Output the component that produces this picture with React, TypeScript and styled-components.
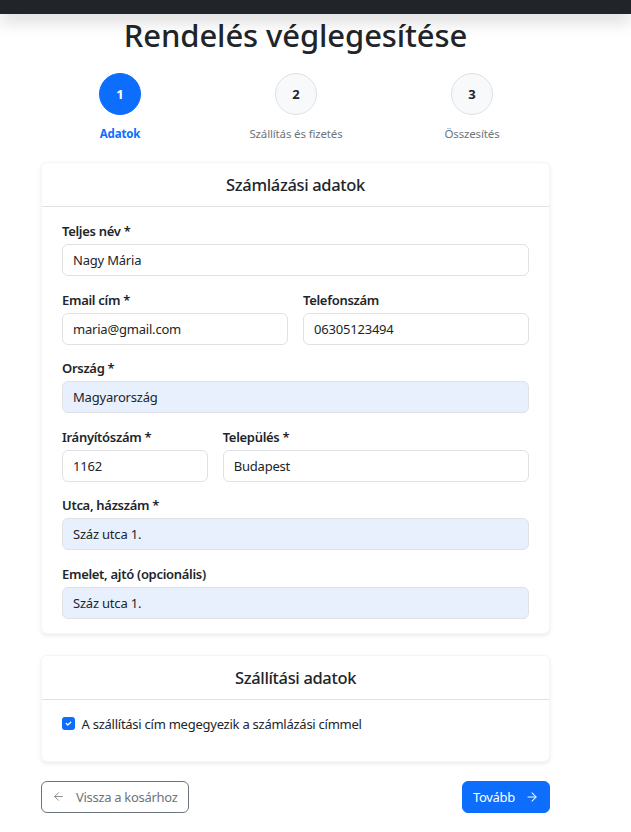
import React from "react";
import styled, { createGlobalStyle } from "styled-components";
import { ArrowLeft, ArrowRight } from "lucide-react";

const Global = createGlobalStyle`
  html, body { margin: 0; padding: 0; background: #fff; }
  body {
    font-family: "Segoe UI", "Noto Sans", "Open Sans", sans-serif;
    color: #212529;
    -webkit-font-smoothing: antialiased;
  }
  * { box-sizing: border-box; }
`;

const Navbar = styled.div`
  height: 14px;
  background: #212529;
  box-shadow: 0 0.5rem 1rem rgba(0, 0, 0, 0.15);
  position: relative;
  z-index: 1;
`;

const Main = styled.main`
  width: 509px;
  margin-left: 41px;
  padding-bottom: 19px;
`;

const Title = styled.h1`
  margin: 3px 0 20px;
  font-size: 31px;
  font-weight: 500;
  line-height: 36px;
  letter-spacing: -0.1px;
  text-align: center;
  color: #212529;
`;

const Steps = styled.div`
  display: grid;
  grid-template-columns: repeat(3, 176px);
  justify-content: center;
  margin: 0 -10px 0 -9px;
`;

const Step = styled.div`
  display: flex;
  flex-direction: column;
  align-items: center;
`;

const Circle = styled.div<{ $active?: boolean }>`
  width: 42px;
  height: 42px;
  border-radius: 50%;
  display: flex;
  align-items: center;
  justify-content: center;
  font-size: 13px;
  font-weight: 700;
  background: ${(p) => (p.$active ? "#0d6efd" : "#f8f9fa")};
  color: ${(p) => (p.$active ? "#fff" : "#212529")};
  border: 1px solid ${(p) => (p.$active ? "#0d6efd" : "#dee2e6")};
`;

const StepLabel = styled.div<{ $active?: boolean }>`
  margin-top: 10px;
  font-size: 11.5px;
  line-height: 18px;
  letter-spacing: -0.15px;
  font-weight: ${(p) => (p.$active ? 700 : 400)};
  color: ${(p) => (p.$active ? "#0d6efd" : "#6c757d")};
`;

const Card = styled.section`
  margin-top: 19px;
  background: #fff;
  border: 1px solid rgba(0, 0, 0, 0.04);
  border-radius: 6px;
  box-shadow: 0 0.125rem 0.25rem rgba(0, 0, 0, 0.075);
  & + & { margin-top: 21px; }
`;

const CardHeader = styled.h5`
  margin: 0;
  height: 44px;
  display: flex;
  align-items: center;
  justify-content: center;
  font-size: 16.5px;
  font-weight: 500;
  letter-spacing: -0.35px;
  border-bottom: 1px solid #dee2e6;
`;

const CardBody = styled.div<{ $pb?: number }>`
  padding: 14px 20px ${(p) => p.$pb ?? 0}px;
`;

const Row = styled.div<{ $cols: string }>`
  display: grid;
  grid-template-columns: ${(p) => p.$cols};
  column-gap: 15px;
`;

const Group = styled.div`
  margin-bottom: 13.6px;
`;

const Label = styled.label`
  display: block;
  font-size: 13px;
  font-weight: 600;
  line-height: 20px;
  letter-spacing: -0.3px;
  margin-bottom: 3px;
`;

const Input = styled.input<{ $filled?: boolean }>`
  display: block;
  width: 100%;
  height: 32px;
  padding: 0 11px 0 10px;
  font-family: inherit;
  font-size: 13px;
  letter-spacing: -0.2px;
  color: #212529;
  background: ${(p) => (p.$filled ? "#e8f0fe" : "#fff")};
  border: 1px solid #dee2e6;
  border-radius: 6px;
  outline: none;
`;

const Check = styled.label`
  display: flex;
  align-items: center;
  gap: 7px;
  font-size: 13px;
  line-height: 20px;
  letter-spacing: -0.25px;
`;

const CheckBox = styled.span`
  width: 12.5px;
  height: 12.5px;
  border-radius: 3px;
  background: #0d6efd;
  display: flex;
  align-items: center;
  justify-content: center;
`;

const Actions = styled.div`
  display: flex;
  justify-content: space-between;
  margin-top: 19px;
`;

const Button = styled.button<{ $primary?: boolean }>`
  height: 32px;
  display: inline-flex;
  align-items: center;
  gap: ${(p) => (p.$primary ? "10px" : "11px")};
  padding: 0 10px;
  font-family: inherit;
  font-size: 13px;
  letter-spacing: -0.3px;
  border-radius: 6px;
  cursor: pointer;
  background: ${(p) => (p.$primary ? "#0d6efd" : "#fff")};
  color: ${(p) => (p.$primary ? "#fff" : "#6c757d")};
  border: 1px solid ${(p) => (p.$primary ? "#0d6efd" : "#6c757d")};
`;

const steps = [
  { n: 1, label: "Adatok", active: true },
  { n: 2, label: "Szállítás és fizetés" },
  { n: 3, label: "Összesítés" },
];

const Field: React.FC<{ label: string; value: string; filled?: boolean }> = ({ label, value, filled }) => (
  <Group>
    <Label>{label}</Label>
    <Input $filled={filled} defaultValue={value} />
  </Group>
);

export default function App() {
  return (
    <>
      <Global />
      <Navbar />
      <Main>
        <Title>Rendelés véglegesítése</Title>
        <Steps>
          {steps.map((s) => (
            <Step key={s.n}>
              <Circle $active={s.active}>{s.n}</Circle>
              <StepLabel $active={s.active}>{s.label}</StepLabel>
            </Step>
          ))}
        </Steps>

        <Card>
          <CardHeader>Számlázási adatok</CardHeader>
          <CardBody>
            <Field label="Teljes név *" value="Nagy Mária" />
            <Row $cols="1fr 1fr">
              <Field label="Email cím *" value="maria@gmail.com" />
              <Field label="Telefonszám" value="06305123494" />
            </Row>
            <Field label="Ország *" value="Magyarország" filled />
            <Row $cols="calc((100% + 15px) / 3 - 15px) 1fr">
              <Field label="Irányítószám *" value="1162" />
              <Field label="Település *" value="Budapest" />
            </Row>
            <Field label="Utca, házszám *" value="Száz utca 1." filled />
            <Field label="Emelet, ajtó (opcionális)" value="Száz utca 1." filled />
          </CardBody>
        </Card>

        <Card>
          <CardHeader>Szállítási adatok</CardHeader>
          <CardBody $pb={27}>
            <Check>
              <CheckBox>
                <svg width="9" height="9" viewBox="0 0 20 20" fill="none">
                  <path d="M5 10l3.5 3.5L15 7" stroke="#fff" strokeWidth="3" strokeLinecap="round" strokeLinejoin="round" />
                </svg>
              </CheckBox>
              A szállítási cím megegyezik a számlázási címmel
            </Check>
          </CardBody>
        </Card>

        <Actions>
          <Button>
            <ArrowLeft size={13} strokeWidth={1.5} />
            Vissza a kosárhoz
          </Button>
          <Button $primary>
            Tovább
            <ArrowRight size={14} strokeWidth={1.75} />
          </Button>
        </Actions>
      </Main>
    </>
  );
}
